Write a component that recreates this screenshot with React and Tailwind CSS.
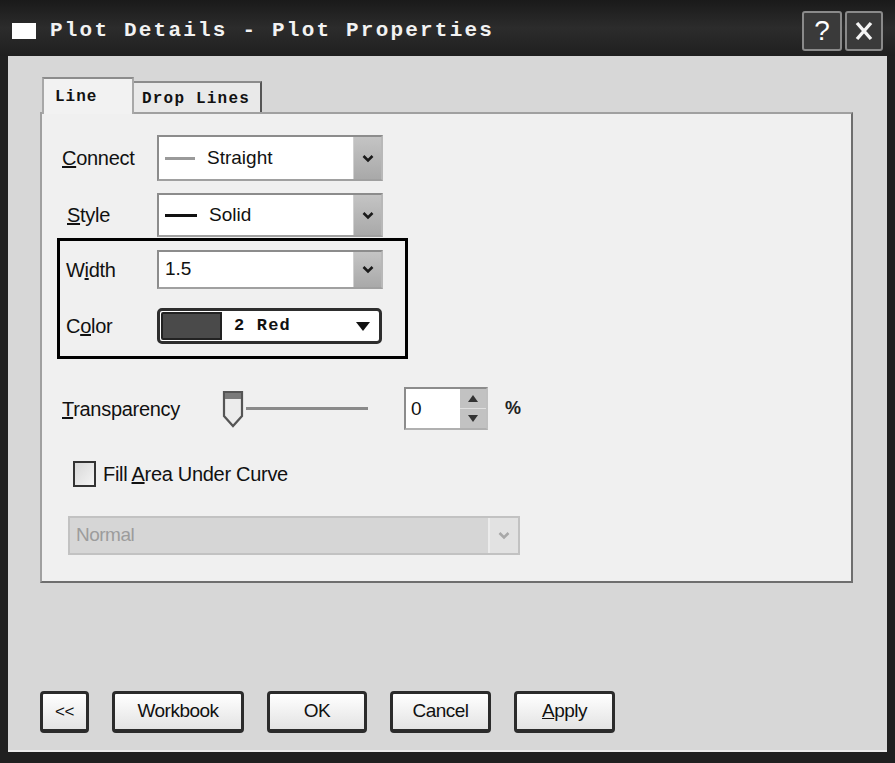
import React from 'react'

const SANS = "font-['Liberation_Sans',Arial,sans-serif]"
const MONO = "font-['Liberation_Mono','Courier_New',monospace]"

function Chevron({ light = false }) {
  return (
    <svg width="12" height="9" viewBox="0 0 12 9">
      <polyline points="1.5,2 6,6.5 10.5,2" fill="none" stroke={light ? '#a8a8a8' : '#1a1a1a'} strokeWidth="2.6" />
    </svg>
  )
}

function Combo({ size, children }) {
  return (
    <div className={`flex w-[226px] ${size} border-2 border-[#8c8c8c] border-r-[#b8b8b8] border-b-[#a0a0a0] bg-white`}>
      <div className={`flex flex-1 items-center gap-[12px] pl-[6px] ${SANS} text-[19px] text-[#111]`}>{children}</div>
      <div className="flex w-[28px] items-center justify-center border-l border-[#d0d0d0] bg-gradient-to-b from-[#c4c4c4] to-[#a9a9a9]">
        <Chevron />
      </div>
    </div>
  )
}

function Label({ children, className = '' }) {
  return <span className={`${SANS} text-[20px] tracking-[-0.3px] text-[#111] ${className}`}>{children}</span>
}

function Button({ w, children }) {
  return (
    <button type="button"
      className={`flex ${w} h-[42px] items-center justify-center rounded-[4px] border-[3px] border-[#2b2b2b] border-b-[4px] bg-gradient-to-b from-white to-[#e3e3e3] ${SANS} text-[19px] tracking-[-0.5px] text-[#111]`}>
      {children}
    </button>
  )
}

export default function App() {
  return (
    <div className="w-[895px] h-[763px] bg-white">
      <div className="flex h-full flex-col rounded-t-[8px] bg-[#202020]">
        {/* title bar */}
        <div className="flex h-[56px] items-center pt-[5px] bg-gradient-to-b from-[#1a1a1a] via-[#2c2c2c] to-[#1f1f1f]">
          <div className="ml-[12px] h-[16px] w-[24px] bg-white" />
          <span className={`ml-[14px] ${MONO} text-[21px] font-bold tracking-[2.2px] text-[#f2f2f2]`}>
            Plot Details - Plot Properties
          </span>
          <div className="ml-auto mr-[12px] flex gap-[3px]">
            <div className="flex h-[40px] w-[40px] items-center justify-center rounded-[3px] border-2 border-[#8a8a8a] bg-[#3a3a3a] font-['Liberation_Sans',sans-serif] text-[28px] leading-none text-white">?</div>
            <div className="flex h-[40px] w-[38px] items-center justify-center rounded-[3px] border-2 border-[#8a8a8a] bg-[#3a3a3a]">
              <svg width="20" height="22" viewBox="0 0 20 22">
                <path d="M3 3 L17 19 M17 3 L3 19" stroke="#f4f4f4" strokeWidth="3.4" />
              </svg>
            </div>
          </div>
        </div>

        {/* client area */}
        <div className="ml-[8px] mr-[8px] mb-[11px] flex flex-1 flex-col bg-[#d7d7d7] border-b-2 border-[#ececec]">
          {/* tabs */}
          <div className="ml-[34px] mt-[21px] flex h-[35px] items-end">
            <div className={`relative z-10 mb-[-2px] flex h-[37px] w-[92px] items-start border-2 border-b-0 border-[#a8a8a8] border-t-[#8c8c8c] bg-[#f2f2f2] pl-[11px] pt-[6px] ${MONO} text-[16px] font-bold tracking-[1px] text-[#111]`}>
              Line
            </div>
            <div className={`flex h-[31px] w-[128px] items-start border-2 border-b-0 border-l-0 border-[#8c8c8c] border-r-[#555] bg-[#e9e9e9] pl-[8px] pt-[4px] ${MONO} text-[16px] font-bold tracking-[1.2px] text-[#111]`}>
              Drop Lines
            </div>
          </div>

          {/* panel */}
          <div className="ml-[32px] flex h-[471px] w-[813px] flex-col border-2 border-[#a0a0a0] border-r-[#6e6e6e] border-b-[#6e6e6e] bg-[#f0f0f0]">
            <div className="ml-[20px] mt-[21px] flex items-center">
              <Label className="w-[95px]"><span className="underline">C</span>onnect</Label>
              <Combo size="h-[46px]">
                <span className="h-[3px] w-[30px] bg-[#9a9a9a]" />
                <span>Straight</span>
              </Combo>
            </div>
            <div className="ml-[20px] mt-[12px] flex items-center">
              <Label className="w-[95px] pl-[5px]"><span className="underline">S</span>tyle</Label>
              <Combo size="h-[44px]">
                <span className="h-[3px] w-[32px] bg-[#111]" />
                <span>Solid</span>
              </Combo>
            </div>

            {/* highlight box */}
            <div className="ml-[15px] mt-[1px] flex w-[351px] flex-col border-[3px] border-black pb-[12px] pl-[6px] pt-[9px]">
              <div className="flex items-center">
                <Label className="w-[91px]">W<span className="underline">i</span>dth</Label>
                <Combo size="h-[39px]">
                  <span>1.5</span>
                </Combo>
              </div>
              <div className="mt-[19px] flex items-center">
                <Label className="w-[91px]">C<span className="underline">o</span>lor</Label>
                <div className="flex h-[36px] w-[225px] items-stretch rounded-[5px] border-[3px] border-[#2e2e2e] bg-white">
                  <div className="my-[1px] ml-[1px] w-[61px] rounded-l-[2px] border-2 border-[#222] bg-[#4a4a4a]" />
                  <span className={`ml-[12px] flex items-center ${MONO} text-[17px] font-bold tracking-[1.2px] text-[#111]`}>2 Red</span>
                  <svg className="ml-auto mr-[9px] self-center" width="14" height="9" viewBox="0 0 14 9">
                    <polygon points="0,0 14,0 7,9" fill="#111" />
                  </svg>
                </div>
              </div>
            </div>

            {/* transparency */}
            <div className="ml-[20px] mt-[28px] flex h-[43px] items-center">
              <Label className="w-[160px]"><span className="underline">T</span>ransparency</Label>
              <div className="flex items-center">
                <svg width="24" height="38" viewBox="0 0 24 38">
                  <path d="M2 2 H20 V26 L11 36 L2 26 Z" fill="#ececec" stroke="#555" strokeWidth="2.2" />
                  <rect x="3" y="3" width="16" height="6" fill="#7a7a7a" />
                </svg>
                <div className="h-[3px] w-[122px] bg-[#8a8a8a]" />
              </div>
              <div className="ml-[36px] flex h-[43px] w-[84px] border-2 border-[#8c8c8c] border-r-[#c0c0c0] border-b-[#b0b0b0] bg-white">
                <span className={`flex-1 pl-[5px] pt-[6px] ${SANS} text-[19px] text-[#111]`}>0</span>
                <div className="flex w-[26px] flex-col bg-[#c2c2c2]">
                  <div className="flex flex-1 items-center justify-center border-b border-[#e0e0e0]">
                    <svg width="10" height="7" viewBox="0 0 10 7"><polygon points="0,7 10,7 5,0" fill="#333" /></svg>
                  </div>
                  <div className="flex flex-1 items-center justify-center">
                    <svg width="10" height="7" viewBox="0 0 10 7"><polygon points="0,0 10,0 5,7" fill="#333" /></svg>
                  </div>
                </div>
              </div>
              <span className={`ml-[17px] ${SANS} text-[18px] font-bold text-[#222]`}>%</span>
            </div>

            {/* fill area */}
            <div className="ml-[31px] mt-[30px] flex h-[27px] items-center">
              <div className="h-[26px] w-[23px] border-2 border-[#333] bg-gradient-to-br from-[#d8d8d8] to-[#f4f4f4]" />
              <Label className="ml-[7px]">Fill <span className="underline">A</span>rea Under Curve</Label>
            </div>

            {/* disabled combo */}
            <div className="ml-[26px] mt-[29px] flex h-[39px] w-[452px] border-2 border-[#c2c2c2] bg-[#d6d6d6]">
              <span className={`flex flex-1 items-center pl-[6px] ${SANS} text-[19px] tracking-[-0.5px] text-[#9c9c9c]`}>Normal</span>
              <div className="flex w-[30px] items-center justify-center border-l-2 border-[#ececec] bg-[#e2e2e2]">
                <Chevron light />
              </div>
            </div>
          </div>

          {/* buttons */}
          <div className="ml-[32px] mt-[108px] flex gap-[23px]">
            <Button w="w-[49px]"><span className="text-[17px]">&lt;&lt;</span></Button>
            <Button w="w-[132px]">Workbook</Button>
            <Button w="w-[100px]">OK</Button>
            <Button w="w-[101px]">Cancel</Button>
            <Button w="w-[101px]"><span><span className="underline">A</span>pply</span></Button>
          </div>
        </div>
      </div>
    </div>
  )
}
